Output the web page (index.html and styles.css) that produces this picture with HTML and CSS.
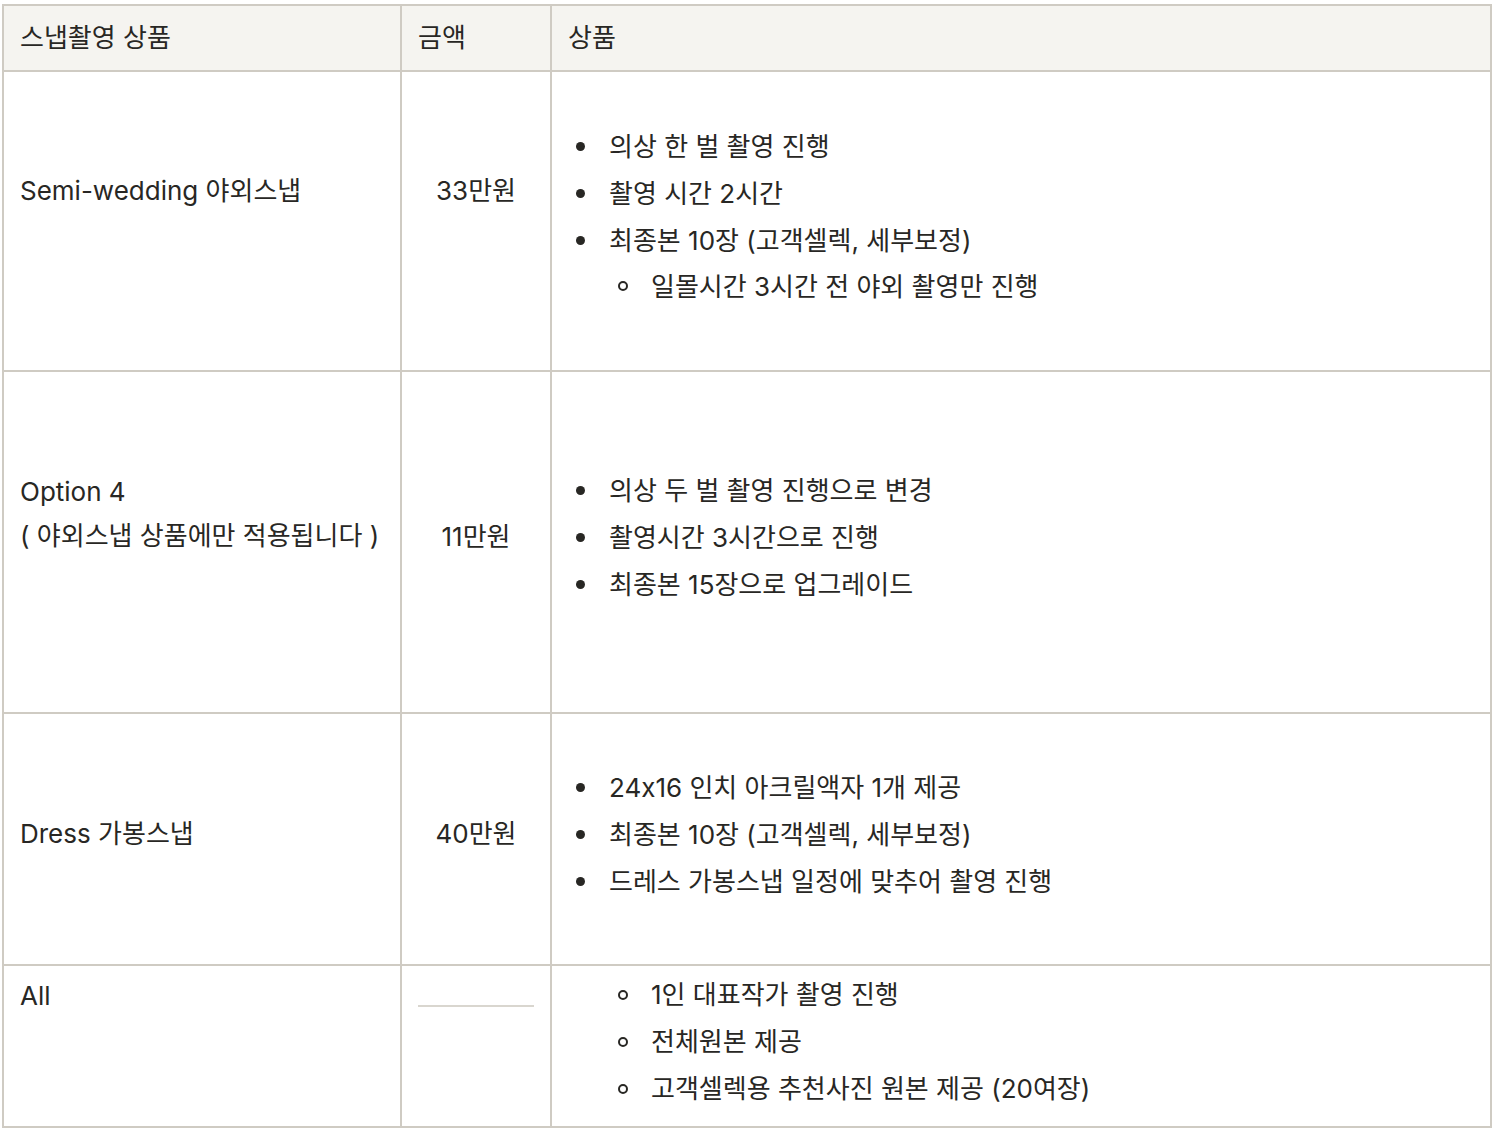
FILE: index.html
```html
<!DOCTYPE html>
<html lang="ko">
<head>
<meta charset="utf-8">
<title>스냅촬영 상품</title>
<link rel="stylesheet" href="styles.css">
</head>
<body>
<table class="price-table">
  <thead>
    <tr class="row-head">
      <th class="col-name">스냅촬영 상품</th>
      <th class="col-price">금액</th>
      <th class="col-detail">상품</th>
    </tr>
  </thead>
  <tbody>
    <tr class="row-semi">
      <td class="col-name cell-lifted">Semi-wedding 야외스냅</td>
      <td class="col-price cell-lifted">33만원</td>
      <td class="col-detail">
        <ul class="items">
          <li>의상 한 벌 촬영 진행</li>
          <li>촬영 시간 2시간</li>
          <li>최종본 10장 (고객셀렉, 세부보정)
            <ul class="items sub">
              <li>일몰시간 3시간 전 야외 촬영만 진행</li>
            </ul>
          </li>
        </ul>
      </td>
    </tr>
    <tr class="row-option">
      <td class="col-name cell-lifted-sm">Option 4<br>( 야외스냅 상품에만 적용됩니다 )</td>
      <td class="col-price">11만원</td>
      <td class="col-detail">
        <ul class="items">
          <li>의상 두 벌 촬영 진행으로 변경</li>
          <li>촬영시간 3시간으로 진행</li>
          <li>최종본 15장으로 업그레이드</li>
        </ul>
      </td>
    </tr>
    <tr class="row-dress">
      <td class="col-name">Dress 가봉스냅</td>
      <td class="col-price">40만원</td>
      <td class="col-detail">
        <ul class="items">
          <li>24x16 인치 아크릴액자 1개 제공</li>
          <li>최종본 10장 (고객셀렉, 세부보정)</li>
          <li>드레스 가봉스냅 일정에 맞추어 촬영 진행</li>
        </ul>
      </td>
    </tr>
    <tr class="row-all">
      <td class="col-name cell-top">All</td>
      <td class="col-price cell-top"><hr class="rule"></td>
      <td class="col-detail">
        <ul class="items sub sub-only">
          <li>1인 대표작가 촬영 진행</li>
          <li>전체원본 제공</li>
          <li>고객셀렉용 추천사진 원본 제공 (20여장)</li>
        </ul>
      </td>
    </tr>
  </tbody>
</table>
</body>
</html>
```

FILE: styles.css
```css
html, body {
  margin: 0;
  padding: 0;
  background: #ffffff;
}

body {
  font-family: "Inter", "Noto Sans CJK KR", sans-serif;
  font-size: 26px;
  color: #282724;
  font-feature-settings: "calt" 0;
}

.price-table {
  margin: 4px 0 0 2px;
  width: 1490px;
  border-collapse: separate;
  border-spacing: 0;
  border-top: 2px solid #cfcbc3;
  border-left: 2px solid #cfcbc3;
  table-layout: fixed;
}

.price-table th,
.price-table td {
  border-right: 2px solid #cfcbc3;
  border-bottom: 2px solid #cfcbc3;
  padding: 6px 16px 16px 16px;
  vertical-align: middle;
  line-height: 44px;
  font-weight: 400;
  text-align: left;
}

.price-table th {
  background: #f5f4f0;
  padding: 10px 16px 10px 16px;
}

.price-table th.col-name,
.price-table td.col-name { width: 364px; }
.price-table th.col-price,
.price-table td.col-price { width: 116px; }

.price-table td.col-price { text-align: center; }

.row-head { height: 65px; }
.row-semi { height: 300px; }
.row-option { height: 342px; }
.row-dress { height: 252px; }
.row-all { height: 162px; }

.price-table .row-all td {
  padding-top: 5px;
  padding-bottom: 14px;
}

.price-table td.cell-lifted { padding-bottom: 66px; }
.price-table td.cell-lifted-sm { padding-bottom: 62px; }
.price-table .row-all td.cell-top {
  vertical-align: top;
  padding-top: 8px;
}

.rule {
  border: 0;
  border-top: 2px solid #d9d6cf;
  margin: 31px 0 0 0;
  height: 0;
}

.items {
  list-style: none;
  margin: 0;
  padding: 0;
}

.items li {
  line-height: 41px;
  padding: 3px 0;
}

.items > li::before {
  content: "";
  display: inline-block;
  width: 9px;
  height: 9px;
  border-radius: 50%;
  background: #282724;
  margin: 0 24px 0 8px;
  vertical-align: middle;
  position: relative;
  top: -2px;
}

.items.sub {
  padding-left: 42px;
}

.items.sub > li {
  padding: 3px 0;
}

.items.sub > li::before {
  width: 10px;
  height: 10px;
  margin: 0 23px 0 8px;
  background: transparent;
  box-sizing: border-box;
  border: 2px solid #282724;
}

.items .items.sub {
  margin-bottom: -3px;
}

.items .items.sub > li {
  padding-top: 5px;
}
```
